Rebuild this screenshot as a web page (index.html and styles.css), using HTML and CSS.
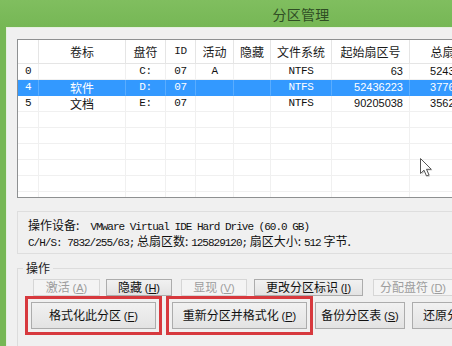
FILE: index.html
```html
<!DOCTYPE html>
<html lang="zh-CN">
<head>
<meta charset="utf-8">
<title>分区管理</title>
<link rel="stylesheet" href="styles.css">
</head>
<body>
<div class="screen">
  <div class="titlebar"><span class="title">分区管理</span></div>
  <div class="window">
    <div class="list">
      <div class="row head">
        <div class="c"></div>
        <div class="c">卷标</div>
        <div class="c">盘符</div>
        <div class="c mono">ID</div>
        <div class="c">活动</div>
        <div class="c">隐藏</div>
        <div class="c">文件系统</div>
        <div class="c">起始扇区号</div>
        <div class="c">总扇区数</div>
      </div>
      <div class="row">
        <div class="c mono left">0</div>
        <div class="c"></div>
        <div class="c mono">C:</div>
        <div class="c mono">07</div>
        <div class="c mono">A</div>
        <div class="c"></div>
        <div class="c mono">NTFS</div>
        <div class="c num">63</div>
        <div class="c num last">52436160</div>
      </div>
      <div class="row sel">
        <div class="c mono left">4</div>
        <div class="c">软件</div>
        <div class="c mono">D:</div>
        <div class="c mono">07</div>
        <div class="c"></div>
        <div class="c"></div>
        <div class="c mono">NTFS</div>
        <div class="c num">52436223</div>
        <div class="c num last">37768815</div>
      </div>
      <div class="row">
        <div class="c mono left">5</div>
        <div class="c">文档</div>
        <div class="c mono">E:</div>
        <div class="c mono">07</div>
        <div class="c"></div>
        <div class="c"></div>
        <div class="c mono">NTFS</div>
        <div class="c num">90205038</div>
        <div class="c num last">35624082</div>
      </div>
      <div class="row"><div class="c"></div><div class="c"></div><div class="c"></div><div class="c"></div><div class="c"></div><div class="c"></div><div class="c"></div><div class="c"></div><div class="c"></div></div>
      <div class="row"><div class="c"></div><div class="c"></div><div class="c"></div><div class="c"></div><div class="c"></div><div class="c"></div><div class="c"></div><div class="c"></div><div class="c"></div></div>
      <div class="row"><div class="c"></div><div class="c"></div><div class="c"></div><div class="c"></div><div class="c"></div><div class="c"></div><div class="c"></div><div class="c"></div><div class="c"></div></div>
      <div class="row"><div class="c"></div><div class="c"></div><div class="c"></div><div class="c"></div><div class="c"></div><div class="c"></div><div class="c"></div><div class="c"></div><div class="c"></div></div>
      <div class="row"><div class="c"></div><div class="c"></div><div class="c"></div><div class="c"></div><div class="c"></div><div class="c"></div><div class="c"></div><div class="c"></div><div class="c"></div></div>
      <div class="row"><div class="c"></div><div class="c"></div><div class="c"></div><div class="c"></div><div class="c"></div><div class="c"></div><div class="c"></div><div class="c"></div><div class="c"></div></div>
    </div>

    <div class="info">
      <div class="line">操作设备:<span class="mono">&nbsp; VMware Virtual IDE Hard Drive (60.0 GB)</span></div>
      <div class="line"><span class="mono">C/H/S: 7832/255/63;</span> 总扇区数: <span class="mono">125829120;</span> 扇区大小: <span class="mono">512</span> 字节.</div>
    </div>

    <fieldset class="group">
      <legend>操作</legend>
      <div class="btnrow r1">
        <button class="btn b-act" disabled>激活 <span class="acc">(<u>A</u>)</span></button>
        <button class="btn b-hide">隐藏 <span class="acc">(<u>H</u>)</span></button>
        <button class="btn b-show" disabled>显现 <span class="acc">(<u>V</u>)</span></button>
        <button class="btn b-label">更改分区标识 <span class="acc">(<u>I</u>)</span></button>
        <button class="btn b-drive" disabled>分配盘符 <span class="acc">(<u>D</u>)</span></button>
      </div>
      <div class="btnrow r2">
        <button class="btn b-fmt mark">格式化此分区 <span class="acc">(<u>F</u>)</span></button>
        <button class="btn b-repart mark">重新分区并格式化 <span class="acc">(<u>P</u>)</span></button>
        <button class="btn b-backup">备份分区表 <span class="acc">(<u>S</u>)</span></button>
        <button class="btn b-restore">还原分区表 <span class="acc">(<u>R</u>)</span></button>
      </div>
    </fieldset>
  </div>

  <svg class="cursor" width="14" height="22" viewBox="0 0 14 22">
    <path d="M1.5 1.5 L1.5 16.5 L5 13.2 L7.5 19 L10 18 L7.5 12.3 L12.3 12.3 Z" fill="#000" opacity="0.18" transform="translate(1.2 1.2)"/>
    <path d="M1.5 1.5 L1.5 16.5 L5 13.2 L7.5 19 L10 18 L7.5 12.3 L12.3 12.3 Z" fill="#fff" stroke="#555" stroke-width="1" stroke-linejoin="round"/>
  </svg>
</div>
</body>
</html>
```

FILE: styles.css
```css
html, body {
  margin: 0;
  padding: 0;
}

body {
  width: 452px;
  height: 346px;
  overflow: hidden;
  background: #7aba58;
  font-family: "Noto Sans CJK SC", "Liberation Sans", sans-serif;
  font-size: 12px;
  color: #111;
}

.screen {
  position: relative;
  width: 602px;
  height: 346px;
  background: linear-gradient(#80be5f, #76b755 27px);
}

.titlebar {
  height: 27px;
  display: flex;
  align-items: center;
  justify-content: center;
}

.title {
  font-size: 14px;
  color: #2f4d24;
  letter-spacing: 0.3px;
  line-height: 16px;
}

.window {
  margin-left: 6px;
  height: 319px;
  box-sizing: border-box;
  background: #f0f0f0;
  border-top: 1px solid #e6f0e0;
  border-left: 1px solid #e6f0e0;
  padding: 11px 0 0 10px;
}

.list {
  width: 560px;
  height: 159px;
  box-sizing: border-box;
  border: 1px solid #8e9091;
  border-right: none;
  background: #fff;
  overflow: hidden;
}

.row {
  display: grid;
  grid-template-columns: 21px 87px 40px 30px 38px 37px 61px 78px 90px;
  height: 16px;
}

.row.head {
  height: 24px;
}

.c {
  box-sizing: border-box;
  border-right: 1px solid #f0f0f0;
  border-bottom: 1px solid #f0f0f0;
  text-align: center;
  line-height: 15px;
  white-space: nowrap;
  overflow: hidden;
}

.head .c {
  line-height: 23px;
  border-color: #e5e5e5;
  color: #1a1a1a;
}

.mono {
  font-family: "Liberation Mono", "DejaVu Sans Mono", monospace;
  font-size: 11px;
  letter-spacing: -0.4px;
}

.left {
  text-align: left;
  padding-left: 7px;
}

.num {
  text-align: right;
  padding-right: 6px;
  font-family: "Liberation Sans", sans-serif;
  font-size: 11px;
}

.num.last {
  padding-right: 20px;
}

.row.sel .c {
  background: #3399ff;
  color: #fff;
  border-right-color: #5aadff;
  border-bottom-color: #3399ff;
}

.info {
  margin-top: 13px;
  width: 560px;
  height: 43px;
  box-sizing: border-box;
  border: 1px solid #dedede;
  border-right: none;
  padding: 6px 0 0 10px;
}

.info .line {
  line-height: 14px;
  white-space: nowrap;
}

.info .mono {
  font-size: 11px;
  letter-spacing: -1px;
}

.group {
  margin: 6px 0 0 0;
  width: 560px;
  box-sizing: border-box;
  border: 1px solid #dcdcdc;
  border-right: none;
  padding: 3px 0 20px 0;
  min-width: 0;
}

.group legend {
  margin-left: 5px;
  padding: 0 3px;
  line-height: 16px;
  color: #1a1a1a;
}

.btnrow {
  display: flex;
}

.r1 {
  padding-left: 15px;
}

.r2 {
  margin-top: 6px;
  padding-left: 13px;
}

.btn {
  box-sizing: border-box;
  font-family: "Noto Sans CJK SC", sans-serif;
  font-size: 12px;
  color: #111;
  background: linear-gradient(#f1f1f1, #e3e3e3);
  border: 1px solid #acacac;
  border-radius: 0;
  padding: 0;
  margin: 0;
  white-space: nowrap;
  line-height: 14px;
}

.btn:disabled {
  color: #9d9d9d;
  background: #f4f4f4;
  border-color: #d6d6d6;
}

.acc {
  font-family: "Liberation Sans", sans-serif;
  font-size: 11px;
}

.r1 .btn {
  height: 17px;
}

.r2 .btn {
  height: 27px;
}

.b-act { width: 67px; margin-right: 6px; }
.b-hide { width: 66px; margin-right: 9px; }
.b-show { width: 66px; margin-right: 7px; }
.b-label { width: 109px; margin-right: 10px; }
.b-drive { width: 80px; }

.b-fmt { width: 125px; margin-right: 16px; }
.b-repart { width: 135px; margin-right: 8px; }
.b-backup { width: 90px; margin-right: 7px; }
.b-restore { width: 100px; }

.mark {
  outline: 3px solid #d7393e;
  outline-offset: 3px;
}

.cursor {
  position: absolute;
  left: 419px;
  top: 157px;
}
```
